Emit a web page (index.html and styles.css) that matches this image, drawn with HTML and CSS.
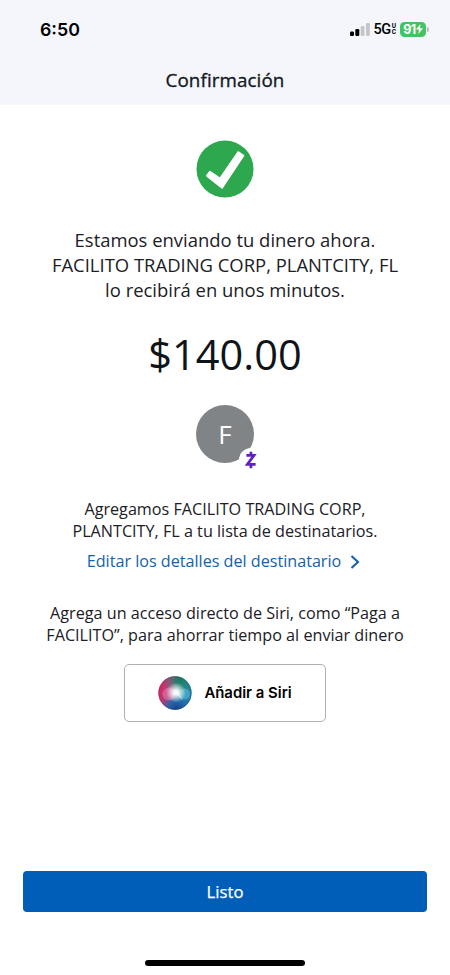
FILE: index.html
```
<!DOCTYPE html>
<html lang="es">
<head>
<meta charset="utf-8">
<title>Confirmación</title>
<link rel="stylesheet" href="styles.css">
</head>
<body>
<div class="screen">
  <header class="header">
    <div class="status">
      <span class="time">6:50</span>
      <div class="indicators">
        <svg class="signal" width="20" height="13" viewBox="0 0 20 13">
          <rect x="0" y="8.5" width="4" height="4.5" rx="1.2" fill="#000"/>
          <rect x="5.3" y="6" width="4" height="7" rx="1.2" fill="#000"/>
          <rect x="10.7" y="3" width="3.8" height="10" rx="1.2" fill="#c3c5c8"/>
          <rect x="16" y="0" width="3.8" height="13" rx="1.2" fill="#c3c5c8"/>
        </svg>
        <span class="network">5G</span>
        <span class="uc"><span>U</span><span>C</span></span>
        <span class="battery">91<svg width="7" height="10" viewBox="0 0 7 10"><path d="M4.5 0 0 5.6h3L2.3 10 7 4.2H3.9z" fill="#fff"/></svg></span>
        <span class="battery-tip"></span>
      </div>
    </div>
    <h1 class="title">Confirmación</h1>
  </header>
  <main class="content">
    <svg class="check" width="58" height="58" viewBox="0 0 58 58">
      <circle cx="29" cy="29" r="28.5" fill="#2da84f"/>
      <path d="M10.8 35.8 14 31.6 24 38.4 42.2 12 47.6 15.6 26 48z" fill="#fff" stroke="#fff" stroke-width="1.6" stroke-linejoin="round"/>
    </svg>
    <p class="message">
      <span>Estamos enviando tu dinero ahora.</span>
      <span>FACILITO TRADING CORP, PLANTCITY, FL</span>
      <span>lo recibirá en unos minutos.</span>
    </p>
    <div class="amount">$140.00</div>
    <div class="avatar">F
      <span class="badge">
        <svg width="12" height="18" viewBox="0 0 12 18"><path d="M1.4 4.4H9L2.3 13.4h8.3M5.9 .8v3.6M5.9 13.4v3.8" fill="none" stroke="#6220c4" stroke-width="2.7"/></svg>
      </span>
    </div>
    <p class="note added">
      <span>Agregamos FACILITO TRADING CORP,</span>
      <span>PLANTCITY, FL a tu lista de destinatarios.</span>
    </p>
    <a class="link"><span>Editar los detalles del destinatario</span><svg width="10" height="14" viewBox="0 0 10 14"><path d="M1.5 1 8 7 1.5 13" fill="none" stroke="#1262ad" stroke-width="2.1"/></svg></a>
    <p class="note siri-note">
      <span>Agrega un acceso directo de Siri, como “Paga a</span>
      <span>FACILITO”, para ahorrar tiempo al enviar dinero</span>
    </p>
    <button class="siri">
      <svg width="34" height="34" viewBox="0 0 34 34">
        <defs>
          <linearGradient id="base" x1="0" y1="0.35" x2="1" y2="0.6">
            <stop offset="0" stop-color="#d8245f"/><stop offset=".35" stop-color="#a9497f"/><stop offset=".6" stop-color="#298c87"/><stop offset="1" stop-color="#267cae"/>
          </linearGradient>
          <radialGradient id="green" cx=".65" cy=".08" r=".5"><stop offset="0" stop-color="#16775f"/><stop offset="1" stop-color="#23957a" stop-opacity="0"/></radialGradient>
          <radialGradient id="blue" cx=".55" cy="1" r=".5"><stop offset="0" stop-color="#173f87"/><stop offset=".5" stop-color="#2060ad" stop-opacity=".85"/><stop offset="1" stop-color="#2460ad" stop-opacity="0"/></radialGradient>
          <radialGradient id="glow"><stop offset="0" stop-color="#fff"/><stop offset=".25" stop-color="#fff" stop-opacity=".9"/><stop offset="1" stop-color="#fff" stop-opacity="0"/></radialGradient>
        </defs>
        <circle cx="17" cy="17" r="16.7" fill="url(#base)"/>
        <circle cx="17" cy="17" r="16.7" fill="url(#green)"/>
        <circle cx="17" cy="17" r="16.7" fill="url(#blue)"/>
        <circle cx="11" cy="18" r="6.5" fill="#f080b8" opacity=".5"/>
        <circle cx="26.5" cy="18" r="5.5" fill="#5cc6e8" opacity=".5"/>
        <circle cx="18" cy="16.5" r="10" fill="url(#glow)"/>
        <path d="m17 16 8 9-5-10z" fill="#fff" opacity=".5"/>
        <circle cx="17" cy="17" r="16.2" fill="none" stroke="#34476d" stroke-opacity=".3"/>
      </svg>
      <span>Añadir a Siri</span>
    </button>
  </main>
  <footer class="footer">
    <button class="done">Listo</button>
    <div class="home"></div>
  </footer>
</div>
</body>
</html>
```
FILE: styles.css
```
* { box-sizing: border-box; }
body { margin: 0; background: #fff; color: #1b2025; font-family: "Open Sans", sans-serif; }
p, h1 { margin: 0; font-weight: 400; }
button { font: inherit; margin: 0; padding: 0; }
svg { display: block; flex: none; }
.screen { width: 450px; height: 975px; display: flex; flex-direction: column; overflow: hidden; }
.header { height: 105px; background: #f4f6fb; flex: none; }
.status { height: 58px; padding: 0 21px 0 40px; display: flex; justify-content: space-between; align-items: center; font-family: Inter, sans-serif; color: #000; }
.time { font-size: 17.8px; font-weight: 600; }
.indicators { display: flex; align-items: center; }
.signal { margin-right: 4px; }
.network { font-family: Roboto, sans-serif; font-size: 14.5px; font-weight: 500; letter-spacing: -.5px; }
.uc { display: flex; flex-direction: column; font-family: Roboto, sans-serif; font-size: 6.5px; line-height: 6px; font-weight: 700; margin-left: 1px; }
.uc span { height: 6px; }
.battery { margin-left: 4px; width: 26px; height: 15px; border-radius: 4.5px; background: #43c463; color: #fff; font-size: 12.5px; font-weight: 700; letter-spacing: -.4px; display: flex; align-items: center; justify-content: center; }
.battery-tip { width: 2px; height: 5px; margin-left: 1px; border-radius: 0 2px 2px 0; background: #b9bcc0; }
.title { font-size: 18.8px; line-height: 26px; text-align: center; margin-top: 9px; color: #14191e; -webkit-text-stroke: .35px #14191e; letter-spacing: .1px; }
.content { display: flex; flex-direction: column; align-items: center; padding-top: 35px; flex: 1; }
.message, .note { display: flex; flex-direction: column; align-items: center; white-space: nowrap; }
.message { margin-top: 29px; font-size: 18.45px; line-height: 25px; }
.amount { margin-top: 24px; font-size: 41.5px; line-height: 56px; color: #0e1418; }
.avatar { position: relative; margin-top: 23px; width: 58px; height: 58px; border-radius: 50%; background: #808487; color: #fff; font-size: 26px; line-height: 58px; text-align: center; }
.badge { position: absolute; left: 43px; top: 43px; width: 24px; height: 24px; border-radius: 50%; background: #fff; display: flex; align-items: center; justify-content: center; }
.note { font-size: 16.18px; line-height: 22px; }
.added { margin-top: 35px; }
.link { margin-top: 8px; margin-right: 3px; display: flex; align-items: center; gap: 9px; font-size: 16.15px; line-height: 23px; color: #1262ad; white-space: nowrap; }
.siri-note { margin-top: 29px; }
.siri { margin-top: 18px; width: 202px; height: 58px; border: 1px solid #b0b0b0; border-radius: 5px; background: #fff; display: flex; align-items: center; justify-content: center; gap: 12px; color: #000; font-family: Inter, sans-serif; font-size: 14.9px; font-weight: 600; white-space: nowrap; }
.footer { height: 104px; flex: none; display: flex; flex-direction: column; align-items: center; }
.done { width: 404px; height: 41px; border: 0; border-radius: 4px; background: #005eb8; color: #fff; font-size: 16.7px; -webkit-text-stroke: .25px #fff; }
.home { margin-top: 48px; width: 160px; height: 6px; border-radius: 3px; background: #000; }
```
